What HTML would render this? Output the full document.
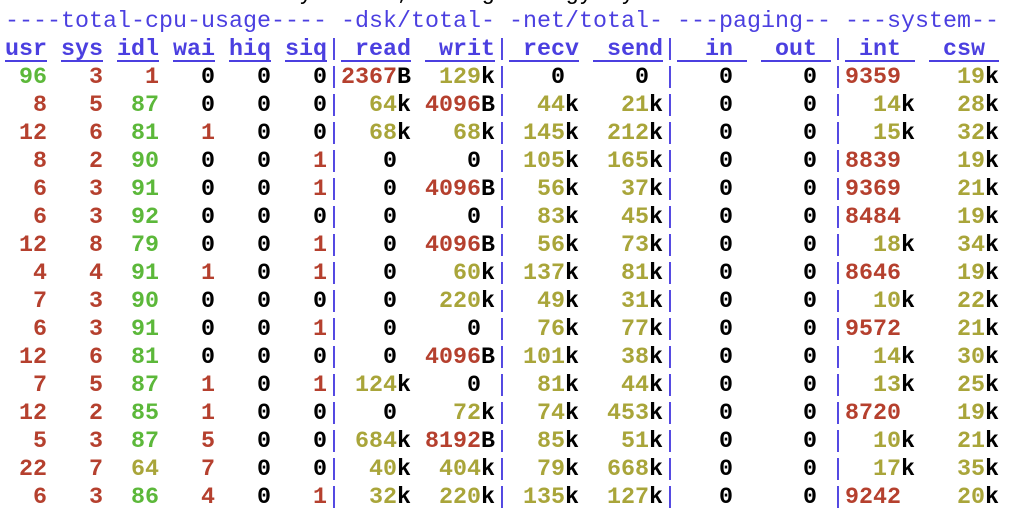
<!DOCTYPE html>
<html><head><meta charset="utf-8"><style>
html,body{margin:0;padding:0;background:#fff;width:1020px;height:516px;overflow:hidden}
pre{position:absolute;left:5px;top:-20px;margin:0;font-family:"Liberation Mono",monospace;font-size:23.33px;line-height:28px;font-weight:bold;color:#000;white-space:pre}
.n{font-weight:normal}
.b{color:#4b3fe0}
.p{color:#4b3fe0;font-weight:normal}
.g{color:#5cb83a}
.r{color:#b5402e}
.y{color:#a9a53a}
u{text-decoration-thickness:2px;text-underline-offset:5px}
</style></head><body><pre><span class="n">You did not select any stats, using -cdngy by default.</span>
<span class="b n">----total-cpu-usage---- -dsk/total- -net/total- ---paging-- ---system--</span>
<span class="b"><u>usr</u> <u>sys</u> <u>idl</u> <u>wai</u> <u>hiq</u> <u>siq</u><span class="p">|</span><u> read</u> <u> writ</u><span class="p">|</span><u> recv</u> <u> send</u><span class="p">|</span><u>  in </u> <u> out </u><span class="p">|</span><u> int </u> <u> csw </u></span>
 <span class="g">96</span>   <span class="r">3</span>   <span class="r">1</span>   0   0   0<span class="p">|</span><span class="r">2367</span>B  <span class="y">129</span>k<span class="p">|</span>   0     0 <span class="p">|</span>   0     0 <span class="p">|</span><span class="r">9359</span>    <span class="y">19</span>k
  <span class="r">8</span>   <span class="r">5</span>  <span class="g">87</span>   0   0   0<span class="p">|</span>  <span class="y">64</span>k <span class="r">4096</span>B<span class="p">|</span>  <span class="y">44</span>k   <span class="y">21</span>k<span class="p">|</span>   0     0 <span class="p">|</span>  <span class="y">14</span>k   <span class="y">28</span>k
 <span class="r">12</span>   <span class="r">6</span>  <span class="g">81</span>   <span class="r">1</span>   0   0<span class="p">|</span>  <span class="y">68</span>k   <span class="y">68</span>k<span class="p">|</span> <span class="y">145</span>k  <span class="y">212</span>k<span class="p">|</span>   0     0 <span class="p">|</span>  <span class="y">15</span>k   <span class="y">32</span>k
  <span class="r">8</span>   <span class="r">2</span>  <span class="g">90</span>   0   0   <span class="r">1</span><span class="p">|</span>   0     0 <span class="p">|</span> <span class="y">105</span>k  <span class="y">165</span>k<span class="p">|</span>   0     0 <span class="p">|</span><span class="r">8839</span>    <span class="y">19</span>k
  <span class="r">6</span>   <span class="r">3</span>  <span class="g">91</span>   0   0   <span class="r">1</span><span class="p">|</span>   0  <span class="r">4096</span>B<span class="p">|</span>  <span class="y">56</span>k   <span class="y">37</span>k<span class="p">|</span>   0     0 <span class="p">|</span><span class="r">9369</span>    <span class="y">21</span>k
  <span class="r">6</span>   <span class="r">3</span>  <span class="g">92</span>   0   0   0<span class="p">|</span>   0     0 <span class="p">|</span>  <span class="y">83</span>k   <span class="y">45</span>k<span class="p">|</span>   0     0 <span class="p">|</span><span class="r">8484</span>    <span class="y">19</span>k
 <span class="r">12</span>   <span class="r">8</span>  <span class="g">79</span>   0   0   <span class="r">1</span><span class="p">|</span>   0  <span class="r">4096</span>B<span class="p">|</span>  <span class="y">56</span>k   <span class="y">73</span>k<span class="p">|</span>   0     0 <span class="p">|</span>  <span class="y">18</span>k   <span class="y">34</span>k
  <span class="r">4</span>   <span class="r">4</span>  <span class="g">91</span>   <span class="r">1</span>   0   <span class="r">1</span><span class="p">|</span>   0    <span class="y">60</span>k<span class="p">|</span> <span class="y">137</span>k   <span class="y">81</span>k<span class="p">|</span>   0     0 <span class="p">|</span><span class="r">8646</span>    <span class="y">19</span>k
  <span class="r">7</span>   <span class="r">3</span>  <span class="g">90</span>   0   0   0<span class="p">|</span>   0   <span class="y">220</span>k<span class="p">|</span>  <span class="y">49</span>k   <span class="y">31</span>k<span class="p">|</span>   0     0 <span class="p">|</span>  <span class="y">10</span>k   <span class="y">22</span>k
  <span class="r">6</span>   <span class="r">3</span>  <span class="g">91</span>   0   0   <span class="r">1</span><span class="p">|</span>   0     0 <span class="p">|</span>  <span class="y">76</span>k   <span class="y">77</span>k<span class="p">|</span>   0     0 <span class="p">|</span><span class="r">9572</span>    <span class="y">21</span>k
 <span class="r">12</span>   <span class="r">6</span>  <span class="g">81</span>   0   0   0<span class="p">|</span>   0  <span class="r">4096</span>B<span class="p">|</span> <span class="y">101</span>k   <span class="y">38</span>k<span class="p">|</span>   0     0 <span class="p">|</span>  <span class="y">14</span>k   <span class="y">30</span>k
  <span class="r">7</span>   <span class="r">5</span>  <span class="g">87</span>   <span class="r">1</span>   0   <span class="r">1</span><span class="p">|</span> <span class="y">124</span>k    0 <span class="p">|</span>  <span class="y">81</span>k   <span class="y">44</span>k<span class="p">|</span>   0     0 <span class="p">|</span>  <span class="y">13</span>k   <span class="y">25</span>k
 <span class="r">12</span>   <span class="r">2</span>  <span class="g">85</span>   <span class="r">1</span>   0   0<span class="p">|</span>   0    <span class="y">72</span>k<span class="p">|</span>  <span class="y">74</span>k  <span class="y">453</span>k<span class="p">|</span>   0     0 <span class="p">|</span><span class="r">8720</span>    <span class="y">19</span>k
  <span class="r">5</span>   <span class="r">3</span>  <span class="g">87</span>   <span class="r">5</span>   0   0<span class="p">|</span> <span class="y">684</span>k <span class="r">8192</span>B<span class="p">|</span>  <span class="y">85</span>k   <span class="y">51</span>k<span class="p">|</span>   0     0 <span class="p">|</span>  <span class="y">10</span>k   <span class="y">21</span>k
 <span class="r">22</span>   <span class="r">7</span>  <span class="y">64</span>   <span class="r">7</span>   0   0<span class="p">|</span>  <span class="y">40</span>k  <span class="y">404</span>k<span class="p">|</span>  <span class="y">79</span>k  <span class="y">668</span>k<span class="p">|</span>   0     0 <span class="p">|</span>  <span class="y">17</span>k   <span class="y">35</span>k
  <span class="r">6</span>   <span class="r">3</span>  <span class="g">86</span>   <span class="r">4</span>   0   <span class="r">1</span><span class="p">|</span>  <span class="y">32</span>k  <span class="y">220</span>k<span class="p">|</span> <span class="y">135</span>k  <span class="y">127</span>k<span class="p">|</span>   0     0 <span class="p">|</span><span class="r">9242</span>    <span class="y">20</span>k
</pre></body></html>
